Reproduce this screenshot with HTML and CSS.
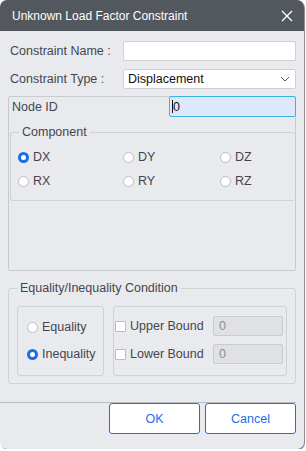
FILE: index.html
```html
<!DOCTYPE html>
<html lang="en">
<head>
<meta charset="UTF-8">
<title>Unknown Load Factor Constraint</title>
<link rel="stylesheet" href="styles.css">
</head>
<body>

<div class="dialog">
    <div class="titlebar">
        <span>Unknown Load Factor Constraint</span>
        <svg class="close" width="12" height="12" viewBox="0 0 12 12"><path d="M1 1L11 11M11 1L1 11" stroke="#fff" stroke-width="1.3"/></svg>
    </div>

    <div class="content">
        <div class="row">
            <label class="lbl">Constraint Name :</label>
            <div class="field"></div>
        </div>
        <div class="row">
            <label class="lbl">Constraint Type :</label>
            <div class="field select">
                <span>Displacement</span>
                <svg width="10" height="6" viewBox="0 0 10 6"><path d="M1 1L5 5L9 1" fill="none" stroke="#555" stroke-width="1"/></svg>
            </div>
        </div>

        <div class="panel">
            <div class="node-row">
                <span>Node ID</span>
                <div class="node-input"><span class="caret"></span>0</div>
            </div>
            <div class="group component">
                <div class="legend">Component</div>
                <div class="radio-grid">
                    <div class="opt"><span class="radio on"></span>DX</div>
                    <div class="opt"><span class="radio"></span>DY</div>
                    <div class="opt"><span class="radio"></span>DZ</div>
                    <div class="opt"><span class="radio"></span>RX</div>
                    <div class="opt"><span class="radio"></span>RY</div>
                    <div class="opt"><span class="radio"></span>RZ</div>
                </div>
            </div>
        </div>

        <div class="group condition">
            <div class="legend">Equality/Inequality Condition</div>
            <div class="cond-body">
                <div class="box left-box">
                    <div class="opt"><span class="radio"></span>Equality</div>
                    <div class="opt"><span class="radio on"></span>Inequality</div>
                </div>
                <div class="box right-box">
                    <div class="bound">
                        <span class="check"></span><span class="bound-lbl">Upper Bound</span>
                        <div class="num">0</div>
                    </div>
                    <div class="bound">
                        <span class="check"></span><span class="bound-lbl">Lower Bound</span>
                        <div class="num">0</div>
                    </div>
                </div>
            </div>
        </div>
    </div>

    <div class="footer">
        <button class="btn">OK</button>
        <button class="btn">Cancel</button>
    </div>
</div>

</body>
</html>
```

FILE: styles.css
```css
body {
    margin: 0;
    background-color: #fff;
    font-family: "Liberation Sans", Arial, sans-serif;
    font-size: 12.5px;
    color: #45464d;
}

.dialog {
    width: 304px;
    height: 449px;
    background-color: #e9eaee;
    border-radius: 7px;
    overflow: hidden;
    box-shadow: 1px 1px 0 #8a8c90;
    display: flex;
    flex-direction: column;
}

.titlebar {
    height: 31px;
    background-color: #53575e;
    color: #fff;
    font-size: 12px;
    display: flex;
    align-items: center;
    justify-content: space-between;
    padding: 0 11px 0 12px;
    flex-shrink: 0;
}

.content {
    padding: 10px 8px 0 8px;
}

.row {
    display: flex;
    align-items: center;
    height: 20px;
    margin-bottom: 8px;
}

.lbl {
    width: 113px;
    padding-left: 2px;
}

.field {
    flex: 1;
    height: 18px;
    background-color: #fff;
    border: 1px solid #cdd0d5;
    border-radius: 2px;
}

.select {
    display: flex;
    align-items: center;
    justify-content: space-between;
    padding: 0 5px 0 4px;
    color: #111;
}

.panel {
    height: 173px;
    border: 1px solid #c8cace;
    border-radius: 2px;
    margin-top: -1px;
}

.node-row {
    display: flex;
    align-items: center;
    justify-content: space-between;
    height: 21px;
    padding-left: 3px;
    margin-top: -1px;
    margin-right: -1px;
}

.node-input {
    width: 123px;
    height: 19px;
    background-color: #dde8fb;
    border: 1px solid #3bb3e2;
    border-radius: 2px;
    display: flex;
    align-items: center;
    padding-left: 2px;
    color: #111;
}

.caret {
    width: 1px;
    height: 13px;
    background-color: #111;
}

.group {
    position: relative;
    border: 1px solid #cfd1d5;
    border-radius: 3px;
}

.legend {
    position: absolute;
    top: -9px;
    left: 8px;
    padding: 0 3px;
    background-color: #e9eaee;
    line-height: 16px;
}

.component {
    margin: 15px 0 0 1px;
    border-right: none;
    height: 67px;
}

.radio-grid {
    display: grid;
    grid-template-columns: 105px 97px 1fr;
    row-gap: 8px;
    padding: 16px 0 0 7px;
}

.opt {
    display: flex;
    align-items: center;
    height: 16px;
}

.radio {
    width: 9px;
    height: 9px;
    border: 1px solid #b9bcc2;
    border-radius: 50%;
    background-color: #fff;
    margin-right: 4px;
}

.radio.on {
    width: 5px;
    height: 5px;
    border: 3px solid #1a6fe6;
}

.condition {
    margin-top: 17px;
    height: 94px;
}

.cond-body {
    display: flex;
    gap: 9px;
    padding: 17px 8px 0 8px;
}

.box {
    border: 1px solid #cfd1d5;
    border-radius: 3px;
    box-sizing: border-box;
    height: 70px;
}

.left-box {
    width: 87px;
    display: flex;
    flex-direction: column;
    gap: 11px;
    padding: 12px 0 0 9px;
}

.right-box {
    flex: 1;
    display: flex;
    flex-direction: column;
    gap: 8px;
    padding: 9px 0 0 1px;
}

.bound {
    display: flex;
    align-items: center;
    height: 20px;
}

.check {
    width: 9px;
    height: 9px;
    border: 1px solid #b9bcc2;
    border-radius: 1px;
    background-color: #fff;
    margin-right: 4px;
}

.bound-lbl {
    width: 83px;
}

.num {
    width: 63px;
    height: 18px;
    background-color: #e0e1e5;
    border: 1px solid #c9cbd0;
    border-radius: 2px;
    color: #8c8e93;
    display: flex;
    align-items: center;
    padding-left: 5px;
}

.footer {
    margin-top: 18px;
    width: 296px;
    border-top: 1px solid #b9bcc1;
    display: flex;
    justify-content: flex-end;
    gap: 5px;
}

.btn {
    width: 91px;
    height: 31px;
    background-color: #fff;
    border: 1px solid #1a6fe6;
    border-radius: 3px;
    color: #1a6fe6;
    font-family: "Liberation Sans", Arial, sans-serif;
    font-size: 12.5px;
}
```
